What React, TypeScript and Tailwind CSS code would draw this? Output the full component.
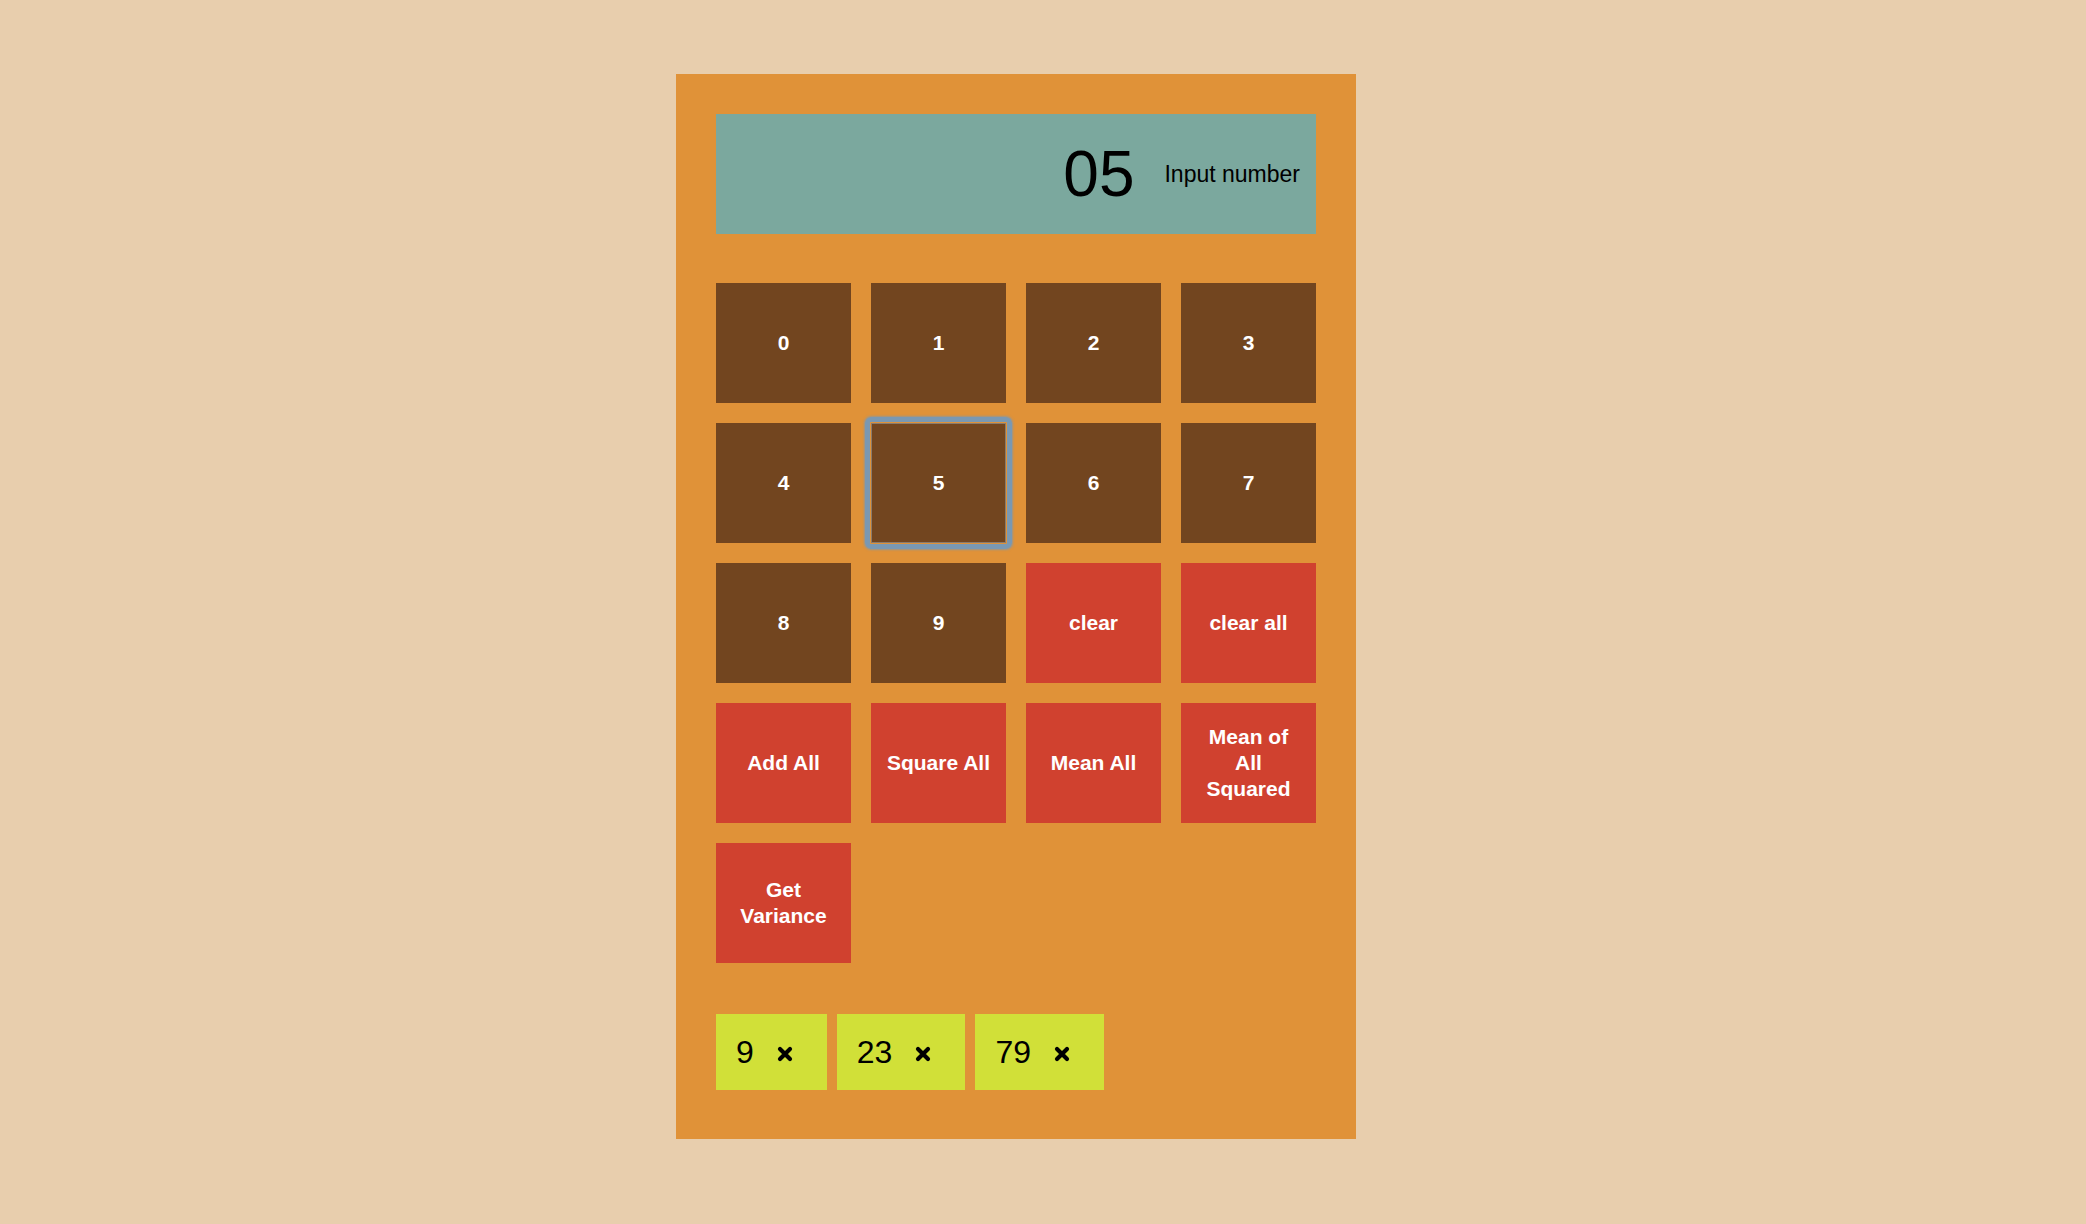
const digits = ["0", "1", "2", "3", "4", "5", "6", "7", "8", "9"];

const actions: { label: string; lines: string[] }[] = [
  { label: "clear", lines: ["clear"] },
  { label: "clear all", lines: ["clear all"] },
  { label: "Add All", lines: ["Add All"] },
  { label: "Square All", lines: ["Square All"] },
  { label: "Mean All", lines: ["Mean All"] },
  { label: "Mean of All Squared", lines: ["Mean of", "All", "Squared"] },
  { label: "Get Variance", lines: ["Get", "Variance"] },
];

const entries = ["9", "23", "79"];

function CrossIcon() {
  return (
    <svg width="16" height="16" viewBox="0 0 16 16" className="mt-1 shrink-0">
      <path
        d="M3 3 L13 13 M13 3 L3 13"
        stroke="#000"
        strokeWidth="4.2"
        strokeLinecap="round"
      />
    </svg>
  );
}

function Key({ children, red, focused }: { children: React.ReactNode; red?: boolean; focused?: boolean }) {
  return (
    <button
      className={
        "relative flex h-[120px] items-center justify-center text-center text-[21px] leading-[26px] font-bold text-white " +
        (red ? "bg-[#d0412f]" : "bg-[#72451f]") +
        (focused ? " border border-[#8a7b6c]" : "")
      }
    >
      {focused && (
        <span className="pointer-events-none absolute -inset-[7px] rounded-[6px] border-[5px] border-[#7a98b2] shadow-[0_0_2px_1px_rgba(122,152,178,0.7)]" />
      )}
      <span>{children}</span>
    </button>
  );
}

export default function App() {
  return (
    <div
      className="min-h-screen bg-[#e8cead] pt-[74px] pl-[676px]"
      style={{ fontFamily: '"Liberation Sans", Arial, sans-serif' }}
    >
      <div className="w-[680px] bg-[#e09238] px-10 pt-10 pb-[49px]">
        {/* display */}
        <div className="flex h-[120px] items-center justify-end bg-[#7ba89e] pr-[16px] text-black">
          <span className="text-[64px] leading-none">05</span>
          <span className="ml-[30px] text-[23px]">Input number</span>
        </div>

        {/* keypad */}
        <div className="mt-[49px] grid grid-cols-4 gap-x-5 gap-y-5">
          {digits.map((d) => (
            <Key key={d} focused={d === "5"}>
              {d}
            </Key>
          ))}
          {actions.map((a) => (
            <Key key={a.label} red>
              {a.lines.map((l, i) => (
                <span key={i} className="block whitespace-nowrap">
                  {l}
                </span>
              ))}
            </Key>
          ))}
        </div>

        {/* entered numbers */}
        <div className="mt-[51px] flex gap-[10px]">
          {entries.map((n) => (
            <div key={n} className="flex h-[76px] items-center gap-[23px] bg-[#d1e038] pl-5 pr-[34px] text-black">
              <span className="text-[32px] leading-none">{n}</span>
              <CrossIcon />
            </div>
          ))}
        </div>
      </div>
    </div>
  );
}
